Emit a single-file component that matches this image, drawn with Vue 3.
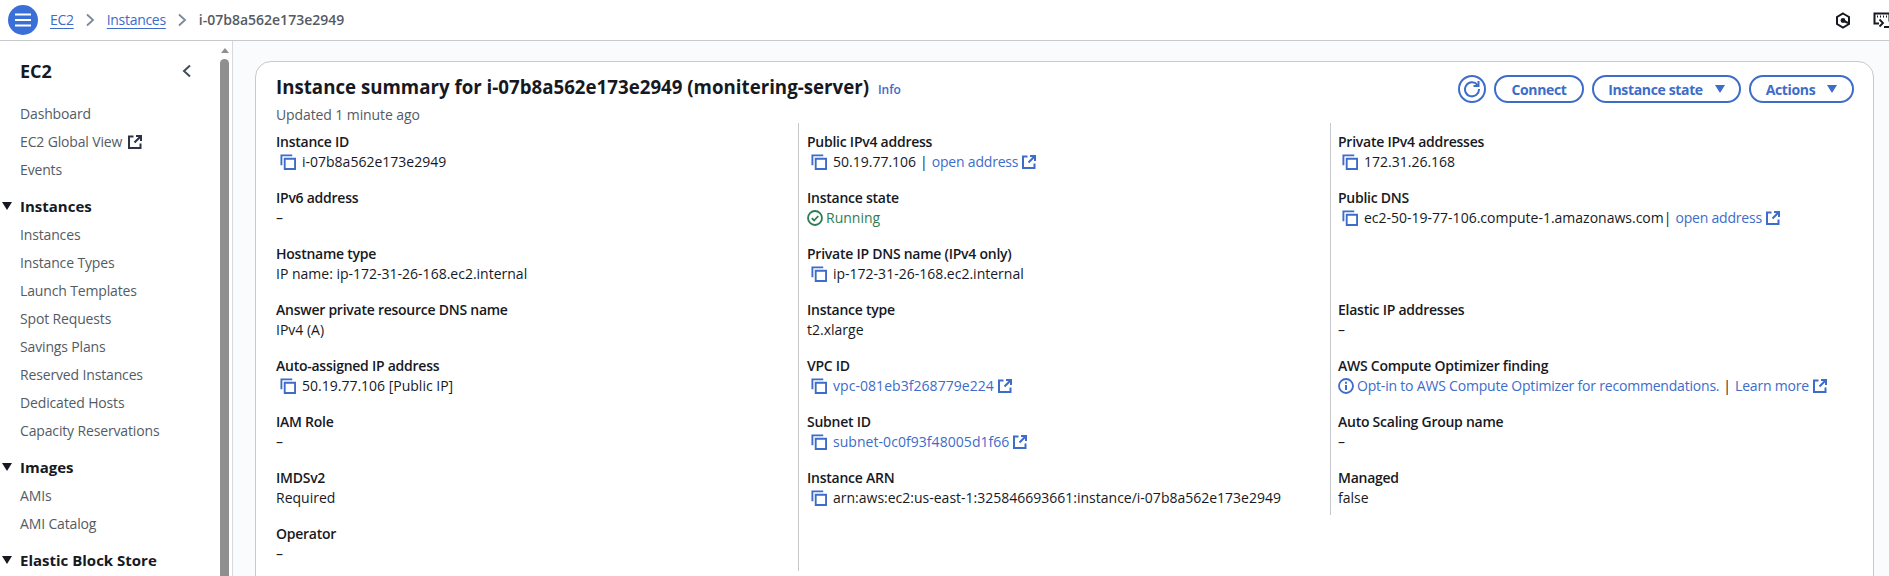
<template>
  <div class="page">
    <header class="topbar">
      <button class="menu-btn" aria-label="Menu">
        <svg width="18" height="14" viewBox="0 0 18 14"><path d="M1 1.500h16M1 7h16M1 12.500h16" fill="none" stroke="#fff" stroke-width="2" /></svg>
      </button>
      <nav class="crumbs">
        <a class="crumb">EC2</a>
        <svg class="crumb-sep" width="10" height="14" viewBox="0 0 10 14"><path d="M2 1.500 8 7l-6 5.500" fill="none" stroke="#7d8998" stroke-width="1.800" /></svg>
        <a class="crumb">Instances</a>
        <svg class="crumb-sep" width="10" height="14" viewBox="0 0 10 14"><path d="M2 1.500 8 7l-6 5.500" fill="none" stroke="#7d8998" stroke-width="1.800" /></svg>
        <span class="crumb-current">i-07b8a562e173e2949</span>
      </nav>
      <div class="top-icons">
        <svg width="16" height="17" viewBox="0 0 16 17"><path d="M8 1.500 14 5v7l-6 3.500L2 12V5z" fill="none" stroke="#16191f" stroke-width="2" /><circle cx="8" cy="8.500" r="2.400" fill="#16191f" /><path d="m8 8.500 5 2.500" stroke="#16191f" stroke-width="2" /></svg>
        <svg class="console" width="18" height="17" viewBox="0 0 18 17"><path d="M6 11.500H1.500V1.500h15v8" fill="none" stroke="#16191f" stroke-width="2" /><path d="M4 4.500h1M7 4.500h1M10 4.500h1M13 4.500h1" stroke="#16191f" stroke-width="2" /><path d="m6.500 7.500 3.500 3.500-3.500 3.500" fill="none" stroke="#16191f" stroke-width="1.800" /><path d="M11 15h7" stroke="#16191f" stroke-width="2" /></svg>
      </div>
    </header>

    <div class="body">
      <aside class="sidebar">
        <div class="nav">
          <div class="nav-head">
            <span class="nav-title">EC2</span>
            <svg width="10" height="14" viewBox="0 0 10 14"><path d="M8 1.500 2 7l6 5.500" fill="none" stroke="#414d5c" stroke-width="2" /></svg>
          </div>
          <template v-for="section in navSections" :key="section.title">
            <div v-if="section.title" class="nav-section">
              <span class="nav-caret"></span>{{ section.title }}
            </div>
            <a v-for="link in section.links" :key="link.label" class="nav-link">
              {{ link.label }}
              <svg v-if="link.external" class="nav-ext" width="14" height="14" viewBox="0 0 14 14"><path d="M5.500 1.500H1v11.500h11.500V8.500" fill="none" stroke="#2b3440" stroke-width="2" /><path d="M8 1h5v5M13 1 6.500 7.500" fill="none" stroke="#2b3440" stroke-width="2" /></svg>
            </a>
          </template>
        </div>
        <div class="scrollbar">
          <span class="scroll-arrow"></span>
          <span class="scroll-thumb"></span>
        </div>
      </aside>

      <main class="main">
        <section class="card">
          <div class="card-head">
            <div>
              <h1 class="card-title">Instance summary for i-07b8a562e173e2949 (monitering-server) <a class="info">Info</a></h1>
              <p class="updated">Updated 1 minute ago</p>
            </div>
            <div class="actions">
              <button class="btn btn-icon" aria-label="Refresh">
                <svg width="18" height="18" viewBox="0 0 18 18"><path d="M14.500 5A7 7 0 1 0 16 9" fill="none" stroke="#3d6cc9" stroke-width="2" /><path d="M15.500 1v5h-5" fill="none" stroke="#3d6cc9" stroke-width="2" /></svg>
              </button>
              <button class="btn btn-connect">Connect</button>
              <button class="btn btn-state">Instance state<span class="btn-caret"></span></button>
              <button class="btn btn-actions">Actions<span class="btn-caret"></span></button>
            </div>
          </div>

          <div class="columns">
            <div v-for="(column, i) in columns" :key="i" class="column">
              <div v-for="(item, j) in column" :key="j" class="item">
                <template v-if="item.label">
                  <div class="item-label">{{ item.label }}</div>
                  <div class="item-value" :class="{ 'is-copy': item.copy }">
                    <svg v-if="item.copy" class="copy" width="16" height="16" viewBox="0 0 17 17"><path d="M1.500 12V1.500H13" fill="none" stroke="#3d6cc9" stroke-width="2" /><path d="M5 5h11v11H5z" fill="none" stroke="#3d6cc9" stroke-width="2" /></svg>
                    <svg v-if="item.status" class="status" width="16" height="16" viewBox="0 0 16 16"><circle cx="8" cy="8" r="7" fill="none" stroke="#2f7d52" stroke-width="1.800" /><path d="m4.800 8.200 2.300 2.300 4.200-4.500" fill="none" stroke="#2f7d52" stroke-width="1.800" /></svg>
                    <svg v-if="item.notice" class="status" width="16" height="16" viewBox="0 0 16 16"><circle cx="8" cy="8" r="7" fill="none" stroke="#3d6cc9" stroke-width="1.800" /><path d="M8 7v5" stroke="#3d6cc9" stroke-width="2" /><path d="M8 3.800v2" stroke="#3d6cc9" stroke-width="2" /></svg>
                    <span v-if="item.value" :class="{ running: item.status }">{{ item.value }}</span>
                    <a v-if="item.notice" class="link link-tight">{{ item.notice }}</a>
                    <span v-if="item.sep" class="pipe" :class="{ tight: item.tightSep }">|</span>
                    <a v-if="item.link" class="link" :class="{ 'link-tight': item.sep }">{{ item.link }}</a>
                    <svg v-if="item.link" class="ext" width="14" height="14" viewBox="0 0 14 14"><path d="M5.500 1.500H1v11.500h11.500V8.500" fill="none" stroke="#3d6cc9" stroke-width="2" /><path d="M8 1h5v5M13 1 6.500 7.500" fill="none" stroke="#3d6cc9" stroke-width="2" /></svg>
                  </div>
                </template>
              </div>
            </div>
          </div>
        </section>
      </main>
    </div>
  </div>
</template>

<script setup>
const navSections = [
  { title: '', links: [{ label: 'Dashboard' }, { label: 'EC2 Global View', external: true }, { label: 'Events' }] },
  {
    title: 'Instances',
    links: [
      { label: 'Instances' },
      { label: 'Instance Types' },
      { label: 'Launch Templates' },
      { label: 'Spot Requests' },
      { label: 'Savings Plans' },
      { label: 'Reserved Instances' },
      { label: 'Dedicated Hosts' },
      { label: 'Capacity Reservations' },
    ],
  },
  { title: 'Images', links: [{ label: 'AMIs' }, { label: 'AMI Catalog' }] },
  { title: 'Elastic Block Store', links: [] },
]

const columns = [
  [
    { label: 'Instance ID', value: 'i-07b8a562e173e2949', copy: true },
    { label: 'IPv6 address', value: '–' },
    { label: 'Hostname type', value: 'IP name: ip-172-31-26-168.ec2.internal' },
    { label: 'Answer private resource DNS name', value: 'IPv4 (A)' },
    { label: 'Auto-assigned IP address', value: '50.19.77.106 [Public IP]', copy: true },
    { label: 'IAM Role', value: '–' },
    { label: 'IMDSv2', value: 'Required' },
    { label: 'Operator', value: '–' },
  ],
  [
    { label: 'Public IPv4 address', value: '50.19.77.106', copy: true, sep: true, link: 'open address' },
    { label: 'Instance state', value: 'Running', status: true },
    { label: 'Private IP DNS name (IPv4 only)', value: 'ip-172-31-26-168.ec2.internal', copy: true },
    { label: 'Instance type', value: 't2.xlarge' },
    { label: 'VPC ID', copy: true, link: 'vpc-081eb3f268779e224' },
    { label: 'Subnet ID', copy: true, link: 'subnet-0c0f93f48005d1f66' },
    { label: 'Instance ARN', value: 'arn:aws:ec2:us-east-1:325846693661:instance/i-07b8a562e173e2949', copy: true },
    {},
  ],
  [
    { label: 'Private IPv4 addresses', value: '172.31.26.168', copy: true },
    { label: 'Public DNS', value: 'ec2-50-19-77-106.compute-1.amazonaws.com', copy: true, sep: true, tightSep: true, link: 'open address' },
    {},
    { label: 'Elastic IP addresses', value: '–' },
    { label: 'AWS Compute Optimizer finding', notice: 'Opt-in to AWS Compute Optimizer for recommendations.', sep: true, link: 'Learn more' },
    { label: 'Auto Scaling Group name', value: '–' },
    { label: 'Managed', value: 'false' },
  ],
]
</script>

<style>
html,
body {
  margin: 0;
  overflow: hidden;
}
</style>

<style scoped>
.page {
  width: 1889px;
  height: 576px;
  overflow: hidden;
  display: flex;
  flex-direction: column;
  background: #fff;
  color: #16191f;
  font-family: "Open Sans", "Noto Sans", sans-serif;
  font-size: 14px;
  line-height: 20px;
}

.topbar {
  flex: none;
  height: 40px;
  display: flex;
  align-items: center;
  padding: 0 0 0 8px;
  border-bottom: 1px solid #c8c9cc;
}

.menu-btn {
  width: 30px;
  height: 30px;
  padding: 0;
  border: none;
  border-radius: 50%;
  background: #3a6fd8;
  display: flex;
  align-items: center;
  justify-content: center;
}

.crumbs {
  display: flex;
  align-items: center;
  margin-left: 12px;
}

.crumb {
  color: #3d6cc9;
  letter-spacing: -0.3px;
  text-decoration: underline;
  text-underline-offset: 3px;
}

.crumb-sep {
  margin: 0 12px 0 11px;
}

.crumb-current {
  color: #545b64;
  font-weight: 600;
}

.top-icons {
  margin-left: auto;
  display: flex;
  align-items: center;
  gap: 22px;
  margin-right: -2px;
}

.body {
  flex: 1;
  display: flex;
  min-height: 0;
}

.sidebar {
  flex: none;
  width: 232px;
  display: flex;
  border-right: 1px solid #d5d8dc;
}

.nav {
  width: 220px;
  padding-top: 19px;
}

.nav-head {
  display: flex;
  align-items: center;
  justify-content: space-between;
  height: 22px;
  padding: 0 28px 0 20px;
  margin-bottom: 18px;
}

.nav-title {
  font-size: 18px;
  font-weight: 700;
}

.nav-link {
  display: flex;
  align-items: center;
  height: 28px;
  padding-left: 20px;
  color: #545b64;
  letter-spacing: -0.15px;
}

.nav-ext {
  margin-left: 6px;
}

.nav-section {
  display: flex;
  align-items: center;
  height: 28px;
  margin: 8px 0 1px;
  padding-left: 2px;
  font-weight: 700;
  font-size: 15px;
}

.nav-caret {
  width: 0;
  height: 0;
  margin-right: 8px;
  border-left: 5px solid transparent;
  border-right: 5px solid transparent;
  border-top: 8px solid #16191f;
}

.scrollbar {
  width: 9px;
  display: flex;
  flex-direction: column;
  align-items: center;
  padding-top: 7px;
}

.scroll-arrow {
  width: 0;
  height: 0;
  border-left: 4px solid transparent;
  border-right: 4px solid transparent;
  border-bottom: 5px solid #8f8f8f;
}

.scroll-thumb {
  flex: 1;
  width: 9px;
  margin-top: 6px;
  border-radius: 5px 5px 0 0;
  background: #8f8f8f;
}

.main {
  flex: 1;
  min-width: 0;
  padding: 20px 15px 0 22px;
  background: #fafbfd;
}

.card {
  height: 600px;
  box-sizing: border-box;
  padding: 0 20px;
  border: 1px solid #c8c9cc;
  border-radius: 16px;
  background: #fff;
}

.card-head {
  display: flex;
  justify-content: space-between;
  padding-top: 12px;
  height: 49px;
}

.card-title {
  margin: 0;
  font-size: 18.7px;
  line-height: 26px;
  font-weight: 700;
}

.info {
  margin-left: 4px;
  font-size: 12px;
  font-weight: 600;
  color: #3d6cc9;
}

.updated {
  margin: 2px 0 0;
  color: #545b64;
  letter-spacing: -0.1px;
}

.actions {
  display: flex;
  align-items: center;
  align-self: flex-start;
  gap: 8px;
  margin-right: -1px;
  padding-top: 1px;
}

.btn {
  height: 28px;
  padding: 0;
  box-sizing: border-box;
  border: 2px solid #3d6cc9;
  border-radius: 14px;
  background: #fff;
  color: #3d6cc9;
  font: 700 14px "Open Sans", "Noto Sans", sans-serif;
  letter-spacing: -0.35px;
  display: flex;
  align-items: center;
  justify-content: center;
}

.btn-icon {
  width: 28px;
  border-radius: 50%;
}

.btn-connect {
  width: 90px;
}

.btn-state {
  width: 149px;
}

.btn-actions {
  width: 105px;
}

.btn-caret {
  width: 0;
  height: 0;
  margin-left: 12px;
  border-left: 5px solid transparent;
  border-right: 5px solid transparent;
  border-top: 8px solid #3d6cc9;
}

.columns {
  display: grid;
  grid-template-columns: 522px 532px 1fr;
  align-items: start;
}

.column + .column {
  border-left: 1px solid #c8c9cc;
  padding-left: 8px;
}

.column:nth-child(3) {
  padding-left: 7px;
}

.item {
  box-sizing: border-box;
  height: 56px;
  padding-top: 9px;
}

.item-label {
  font-weight: 600;
  letter-spacing: -0.25px;
}

.item-value {
  display: flex;
  align-items: center;
  white-space: nowrap;
}

.is-copy {
  padding-left: 4px;
}

.copy {
  margin-right: 6px;
}

.status {
  margin-right: 3px;
}

.running {
  color: #2f7d52;
}

.link {
  color: #3d6cc9;
  letter-spacing: 0.05px;
}

.link-tight {
  letter-spacing: -0.2px;
}

.pipe {
  margin: 0 4px;
}

.pipe.tight {
  margin-left: 0;
}

.ext {
  margin-left: 4px;
}
</style>
